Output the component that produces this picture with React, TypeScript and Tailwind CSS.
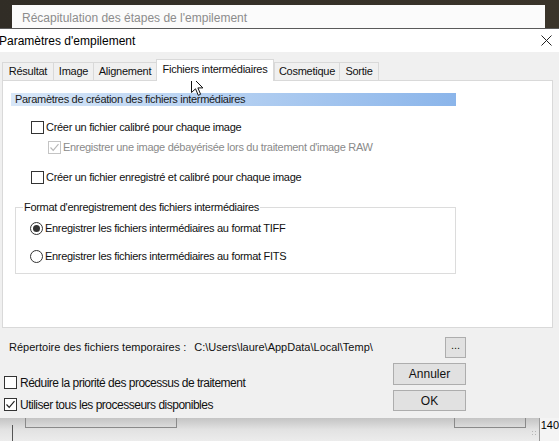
import React from 'react';

type Tab = { label: string; width: string; active?: boolean };

const tabs: Tab[] = [
  { label: 'Résultat', width: 'w-[51px]' },
  { label: 'Image', width: 'w-[40px]' },
  { label: 'Alignement', width: 'w-[63px]' },
  { label: 'Fichiers intermédiaires', width: 'w-[118px]', active: true },
  { label: 'Cosmetique', width: 'w-[65px]' },
  { label: 'Sortie', width: 'w-[40px]' },
];

function CheckBox({ checked, disabled }: { checked?: boolean; disabled?: boolean }) {
  return (
    <span
      className={`w-[13px] h-[13px] shrink-0 border bg-white flex items-center justify-center ${
        disabled ? 'border-[#c4c4c4]' : 'border-[#333333]'
      }`}
    >
      {checked && (
        <svg width="11" height="11" viewBox="0 0 11 11">
          <path
            d="M1.5 5.5 L4.2 8.3 L9.5 2.2"
            fill="none"
            stroke={disabled ? '#b8b8b8' : '#222222'}
            strokeWidth="1.2"
          />
        </svg>
      )}
    </span>
  );
}

function Radio({ selected }: { selected?: boolean }) {
  return (
    <span className="w-[13px] h-[13px] shrink-0 rounded-full border border-[#333333] bg-white flex items-center justify-center">
      {selected && <span className="w-[7px] h-[7px] rounded-full bg-[#333333]" />}
    </span>
  );
}

function Button({ children, className = '' }: { children: React.ReactNode; className?: string }) {
  return (
    <div
      className={`bg-[#e1e1e1] border border-[#adadad] flex items-center justify-center text-[12px] text-[#111] ${className}`}
    >
      {children}
    </div>
  );
}

export default function App() {
  return (
    <div className="relative w-[559px] h-[441px] overflow-hidden bg-[#2b2923] font-['Liberation_Sans',Arial,sans-serif] text-[11px] text-[#111] flex flex-col">
      {/* window behind the dialog */}
      <div className="h-[28px] shrink-0 flex pl-[12px] pr-[14px] pt-[5px] bg-linear-to-r from-[#312d26] to-[#3a342a]">
        <div className="flex-1 bg-[#fbfbfb] flex items-center pl-[10px] pt-[3px] text-[12px] text-[#8c8c8c]">
          Récapitulation des étapes de l'empilement
        </div>
      </div>

      {/* stacking settings dialog */}
      <div className="h-[390px] shrink-0 bg-[#f0f0f0] border-t border-[#5a5a5a] flex flex-col">
        <div className="h-[23px] bg-white flex items-center justify-between pr-[7px]">
          <span className="-ml-px text-[12px] text-black">Paramètres d'empilement</span>
          <svg width="11" height="11" viewBox="0 0 11 11">
            <path d="M0.5 0.5 L10.5 10.5 M10.5 0.5 L0.5 10.5" stroke="#222" strokeWidth="1" />
          </svg>
        </div>

        {/* tab strip */}
        <div className="h-[28px] flex items-end pl-[2px] tracking-[-0.25px]">
          {tabs.map((t, i) => (
            <div
              key={t.label}
              className={`${t.width} flex items-center justify-center border-t border-l border-[#d9d9d9] ${
                i === tabs.length - 1 ? 'border-r' : ''
              } ${
                t.active
                  ? 'h-[22px] bg-white border-r relative z-10 -mb-px pb-[3px]'
                  : 'h-[18px] bg-[#f0f0f0]'
              }`}
            >
              {t.label}
            </div>
          ))}
        </div>

        {/* tab panel */}
        <div className="ml-[2px] w-[551px] h-[248px] bg-white border border-[#d9d9d9] flex flex-col pt-[12px] pl-[8px] tracking-[-0.3px]">
          <div className="w-[445px] h-[13px] bg-linear-to-r from-[#d8e7f8] via-[#b3cff1] to-[#8bb5ea] flex items-center pl-[4px] text-[#1a1a1a]">
            Paramètres de création des fichiers intermédiaires
          </div>

          <div className="mt-[15px] pl-[20px] flex items-center gap-[2px] h-[13px]">
            <CheckBox />
            <span>Créer un fichier calibré pour chaque image</span>
          </div>
          <div className="mt-[7px] pl-[37px] flex items-center gap-[2px] h-[13px] text-[#8a8a8a]">
            <CheckBox checked disabled />
            <span>Enregistrer une image débayérisée lors du traitement d'image RAW</span>
          </div>
          <div className="mt-[17px] pl-[20px] flex items-center gap-[2px] h-[13px]">
            <CheckBox />
            <span>Créer un fichier enregistré et calibré pour chaque image</span>
          </div>

          {/* output format group */}
          <div className="mt-[23px] ml-[4px] w-[441px] h-[67px] border border-[#dcdcdc] flex flex-col pl-[14px]">
            <span className="-mt-[7px] -ml-[7px] self-start bg-white px-[1px] leading-[13px]">
              Format d'enregistrement des fichiers intermédiaires
            </span>
            <div className="mt-[8px] flex items-center gap-[2px] h-[13px]">
              <Radio selected />
              <span>Enregistrer les fichiers intermédiaires au format TIFF</span>
            </div>
            <div className="mt-[15px] flex items-center gap-[2px] h-[13px]">
              <Radio />
              <span>Enregistrer les fichiers intermédiaires au format FITS</span>
            </div>
          </div>
        </div>

        {/* temp folder + options */}
        <div className="flex items-center h-[21px] mt-[9px] pl-[9px] pr-[93px]">
          <span>Répertoire des fichiers temporaires :</span>
          <span className="ml-[8px]">C:\Users\laure\AppData\Local\Temp\</span>
          <Button className="ml-auto w-[21px] h-[21px] !text-[11px] pb-[4px]">...</Button>
        </div>

        <div className="flex pr-[93px] mt-[5px]">
          <div className="flex flex-col pl-[4px] pt-[13px] gap-[9px] text-[12px] tracking-[-0.5px]">
            <div className="flex items-center gap-[3px] h-[13px]">
              <CheckBox />
              <span>Réduire la priorité des processus de traitement</span>
            </div>
            <div className="flex items-center gap-[3px] h-[13px]">
              <CheckBox checked />
              <span>Utiliser tous les processeurs disponibles</span>
            </div>
          </div>
          <div className="ml-auto flex flex-col gap-[5px]">
            <Button className="w-[73px] h-[22px]">Annuler</Button>
            <Button className="w-[73px] h-[21px]">OK</Button>
          </div>
        </div>
      </div>

      {/* bits of the window underneath */}
      <div className="flex-1 bg-linear-to-b from-[#c4c4c4] via-[#e2e2e2] to-[#ececec] flex">
        <div className="ml-[12px] mt-[7px] w-px bg-[#555]" />
        <div className="ml-[12px] w-[156px] h-[10px] border-x border-b border-[#8a8a8a]" />
        <div className="ml-[277px] w-[74px] h-[10px] border-x border-b border-[#8a8a8a]" />
        <div className="ml-[5px] mt-[12px] w-[6px] h-[7px] bg-[radial-gradient(circle,#b5b5b5_1px,transparent_1px)] bg-[length:3px_3px]" />
        <div className="ml-[2px] flex-1 border-l border-[#9a9a9a] bg-[#f4f4f4] text-[11px] text-black pt-[1px] pl-[1px] leading-[12px]">
          140
        </div>
      </div>

      {/* mouse pointer */}
      <svg
        className="absolute left-[191px] top-[76px]"
        width="13"
        height="21"
        viewBox="0 0 13 21"
      >
        <path
          d="M0.5 0.5 L0.5 16.5 L4.5 12.8 L7.3 19.3 L9.6 18.3 L6.9 11.9 L11.9 11.9 Z"
          fill="#fff"
          stroke="#111"
          strokeWidth="1"
          strokeLinejoin="round"
        />
      </svg>
    </div>
  );
}
